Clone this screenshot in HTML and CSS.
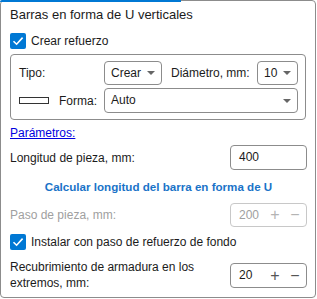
FILE: index.html
```html
<!DOCTYPE html>
<html lang="es">
<head>
    <meta charset="UTF-8">
    <title>Barras en forma de U verticales</title>
    <link rel="stylesheet" href="styles.css">
</head>
<body>
    <div class="panel">
        <div class="title">Barras en forma de U verticales</div>

        <label class="check-row first">
            <span class="checkbox"><svg width="16" height="16" viewBox="0 0 16 16"><path d="M3.5 8.2 L6.6 11.2 L12.6 4.6" fill="none" stroke="#fff" stroke-width="1.6"/></svg></span>
            Crear refuerzo
        </label>

        <div class="group">
            <div class="group-row">
                <span class="lbl lbl-tipo">Tipo:</span>
                <div class="combo combo-tipo">Crear<span class="arrow"></span></div>
                <span class="lbl lbl-diam">Diámetro, mm:</span>
                <div class="combo combo-diam">10<span class="arrow"></span></div>
            </div>
            <div class="group-row">
                <span class="shape-icon"></span>
                <span class="lbl lbl-forma">Forma:</span>
                <div class="combo combo-forma">Auto<span class="arrow"></span></div>
            </div>
        </div>

        <a class="link" href="#">Parámetros:</a>

        <div class="field-row row-long">
            <span class="lbl">Longitud de pieza, mm:</span>
            <div class="input">400</div>
        </div>

        <div class="calc">Calcular longitud del barra en forma de U</div>

        <div class="field-row row-paso disabled">
            <span class="lbl">Paso de pieza, mm:</span>
            <div class="input spin">200<span class="plus">+</span><span class="minus">−</span></div>
        </div>

        <label class="check-row second">
            <span class="checkbox"><svg width="16" height="16" viewBox="0 0 16 16"><path d="M3.5 8.2 L6.6 11.2 L12.6 4.6" fill="none" stroke="#fff" stroke-width="1.6"/></svg></span>
            Instalar con paso de refuerzo de fondo
        </label>

        <div class="field-row row-recub">
            <span class="lbl two-line">Recubrimiento de armadura en los extremos, mm:</span>
            <div class="input spin">20<span class="plus">+</span><span class="minus">−</span></div>
        </div>
    </div>
</body>
</html>
```

FILE: styles.css
```css
body {
    margin: 0;
    background: #fff;
    font-family: "Liberation Sans", Arial, sans-serif;
    font-size: 12px;
    color: #1b1b1b;
}
.panel {
    position: relative;
    box-sizing: border-box;
    width: 316px;
    height: 298px;
    border: 1px solid #8c8c8c;
    border-radius: 4px;
    padding: 6px 8px 0 9px;
    display: flex;
    flex-direction: column;
}
.panel::before {
    content: "";
    position: absolute;
    left: -1px;
    top: -1px;
    width: 181px;
    height: 2px;
    background: #0078d4;
    border-top-left-radius: 3px;
}
.title {
    height: 16px;
    line-height: 16px;
    font-size: 13px;
}
.check-row {
    display: flex;
    align-items: center;
    height: 16px;
    line-height: 16px;
}
.check-row.first { margin-top: 10px; }
.check-row.second { margin-top: 7px; }
.checkbox {
    width: 16px;
    height: 16px;
    border-radius: 2px;
    background: #0078d4;
    margin-right: 5px;
    display: inline-block;
}
.checkbox svg { display: block; }

.group {
    margin-top: 5px;
    margin-right: 1px;
    border: 1px solid #8c8c8c;
    border-radius: 4px;
    padding: 6px 7px 6px 8px;
    display: flex;
    flex-direction: column;
    gap: 3px;
}
.group-row {
    display: flex;
    align-items: center;
}
.lbl-tipo { width: 85px; }
.lbl-diam { flex: 1; margin-left: 9px; }
.shape-icon {
    box-sizing: border-box;
    width: 30px;
    height: 7px;
    border: 1px solid #333;
    margin-right: 10px;
}
.lbl-forma { width: 45px; }

.combo {
    position: relative;
    box-sizing: border-box;
    height: 24px;
    line-height: 22px;
    border: 1px solid #8c8c8c;
    border-radius: 4px;
    padding-left: 6px;
}
.combo-tipo { width: 58px; }
.combo-diam { width: 41px; }
.combo-forma { flex: 1; height: 25px; line-height: 23px; }
.arrow {
    position: absolute;
    right: 6px;
    top: 50%;
    margin-top: -2px;
    width: 0;
    height: 0;
    border-left: 4px solid transparent;
    border-right: 4px solid transparent;
    border-top: 4px solid #666;
}

.link {
    margin-top: 6px;
    color: #0000e0;
    text-decoration: underline;
    height: 14px;
    line-height: 14px;
    align-self: flex-start;
}

.field-row {
    display: flex;
    align-items: center;
}
.field-row .lbl { flex: 1; }
.row-long { margin-top: 5px; }
.row-paso { margin-top: 8px; }
.row-recub { margin-top: 9px; }
.input {
    box-sizing: border-box;
    width: 77px;
    height: 25px;
    line-height: 23px;
    border: 1px solid #8c8c8c;
    border-radius: 4px;
    padding-left: 8px;
    display: flex;
}
.row-paso .input { height: 24px; line-height: 22px; }
.spin .plus {
    margin-left: auto;
    width: 20px;
    text-align: center;
    font-size: 16px;
    color: #555;
}
.spin .minus {
    width: 20px;
    margin-right: 1px;
    text-align: center;
    font-size: 16px;
    color: #555;
}
.disabled .lbl,
.disabled .input { color: #a0a0a0; }
.disabled .input { border-color: #c8c8c8; }
.disabled .spin .plus,
.disabled .spin .minus { color: #b4b4b4; }

.calc {
    margin-top: 9px;
    height: 16px;
    line-height: 16px;
    text-align: center;
    font-weight: bold;
    font-size: 11.6px;
    color: #1a73c8;
}
.two-line {
    line-height: 16px;
    padding-right: 20px;
}
```
